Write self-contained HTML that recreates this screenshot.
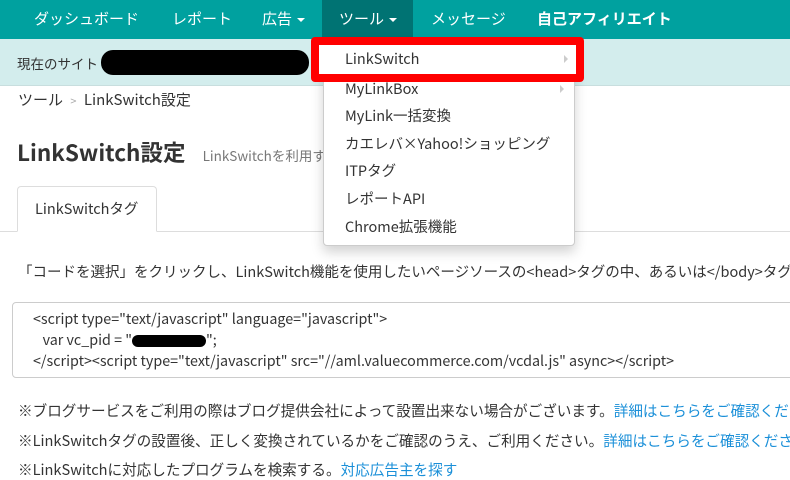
<!DOCTYPE html>
<html><head><meta charset="utf-8"><style>
*{margin:0;padding:0;box-sizing:border-box}
body{width:790px;height:470px;overflow:hidden;background:#fff;font-family:"Noto Sans CJK JP","Liberation Sans",sans-serif;color:#333;position:relative;font-size:14px}
.a{position:absolute;white-space:nowrap}
.nav{left:0;top:0;width:790px;height:39px;background:#00a19f}
.nav span{position:absolute;top:8px;color:#fff;font-size:15px}
.car{display:inline-block;border-left:4px solid transparent;border-right:4px solid transparent;border-top:4px solid #fff;vertical-align:middle;margin-left:5px}
.sub{left:0;top:39px;width:790px;height:47px;background:#d3eded;border-bottom:1px solid #c8dede}
.dd{left:323px;top:38px;width:252px;height:208px;background:#fff;border:1px solid #ccc;border-radius:0 0 4px 4px;box-shadow:0 6px 12px rgba(0,0,0,.18)}
.dd div{position:absolute;left:21px;font-size:14.5px;color:#333}
.blue{color:#1a8fd8}
</style></head><body>
<div class="a nav">
<div style="position:absolute;left:322px;top:0;width:91px;height:39px;background:#007373"></div>
<span style="left:34px">ダッシュボード</span>
<span style="left:172px">レポート</span>
<span style="left:262px">広告<i class="car"></i></span>
<span style="left:339px">ツール<i class="car"></i></span>
<span style="left:431px">メッセージ</span>
<span style="left:537px;font-weight:bold">自己アフィリエイト</span>
</div>
<div class="a sub"><span class="a" style="left:17px;top:14px;font-size:13.5px;color:#333">現在のサイト</span>
<div class="a" style="left:101px;top:11px;width:208px;height:25px;background:#000;border-radius:12px"></div></div>
<div class="a" style="left:18px;top:89px;font-size:15px">ツール <span style="color:#aaa;font-size:11px;margin:0 4px">&gt;</span> LinkSwitch設定</div>
<div class="a" style="left:17px;top:136px;font-size:22.5px;font-weight:bold">LinkSwitch設定 <span style="font-size:13.5px;font-weight:normal;color:#777;margin-left:12px">LinkSwitchを利用す</span></div>
<div class="a" style="left:0;top:231px;width:790px;border-top:1px solid #ddd"></div>
<div class="a" style="left:17px;top:186px;width:140px;height:46px;border:1px solid #ddd;border-bottom:1px solid #fff;border-radius:4px 4px 0 0;background:#fff"><span class="a" style="left:17px;top:11px;font-size:14.5px">LinkSwitchタグ</span></div>
<div class="a" style="left:18px;top:261px;font-size:14.5px">「コードを選択」をクリックし、LinkSwitch機能を使用したいページソースの&lt;head&gt;タグの中、あるいは&lt;/body&gt;タグ</div>
<div class="a" style="left:12px;top:302px;width:800px;height:76px;border:1px solid #ccc;border-radius:4px;font-size:14.3px;line-height:21px;padding:5px 0 0 20px">
&lt;script type="text/javascript" language="javascript"&gt;<br>&nbsp;&nbsp;&nbsp;var vc_pid = "<span style="display:inline-block;width:74px;height:12px;background:#000;border-radius:6px;vertical-align:middle"></span>";<br>&lt;/script&gt;&lt;script type="text/javascript" src="//aml.valuecommerce.com/vcdal.js" async&gt;&lt;/script&gt;</div>
<div class="a" style="left:18px;top:400px;font-size:14.6px">※ブログサービスをご利用の際はブログ提供会社によって設置出来ない場合がございます。<span class="blue">詳細はこちらをご確認くだ</span></div>
<div class="a" style="left:18px;top:430px;font-size:14.6px">※LinkSwitchタグの設置後、正しく変換されているかをご確認のうえ、ご利用ください。<span class="blue">詳細はこちらをご確認くださ</span></div>
<div class="a" style="left:18px;top:459px;font-size:14.6px">※LinkSwitchに対応したプログラムを検索する。<span class="blue">対応広告主を探す</span></div>
<div class="a dd">
<div style="top:39px">MyLinkBox</div><span class="a" style="right:10px;top:46px;border-left:4px solid #ccc;border-top:4px solid transparent;border-bottom:4px solid transparent"></span>
<div style="top:66px">MyLink一括変換</div>
<div style="top:94px">カエレバ×Yahoo!ショッピング</div>
<div style="top:121px">ITPタグ</div>
<div style="top:149px">レポートAPI</div>
<div style="top:177px">Chrome拡張機能</div>
</div>
<div class="a" style="left:311px;top:37px;width:273px;height:45px;border:8px solid #f00;border-radius:4px;background:#fff">
<span class="a" style="left:26px;top:3px;font-size:14.5px;color:#333">LinkSwitch</span>
<span class="a" style="right:8px;top:10px;border-left:4px solid #ccc;border-top:4px solid transparent;border-bottom:4px solid transparent"></span>
</div>
</body></html>
